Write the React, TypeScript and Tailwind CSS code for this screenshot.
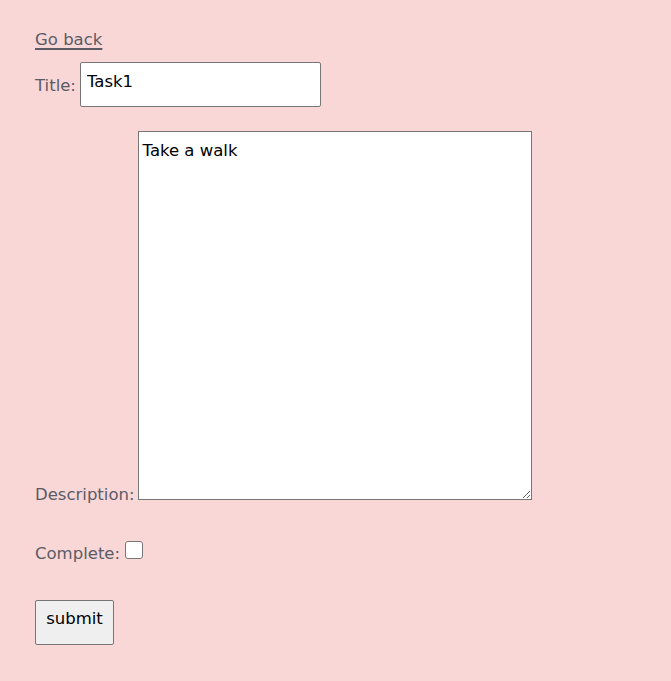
import { FC } from 'react';

const App: FC = () => {
  return (
    <div
      className="min-h-[681px] bg-[#f9d7d6] px-[35px] pt-[29px] text-[16.5px] text-[#5b5b66]"
      style={{ fontFamily: '"DejaVu Sans", "Noto Sans", sans-serif' }}
    >
      <a href="#" className="block h-[24px] leading-[22px] text-[#5b5b66] underline decoration-[2px] underline-offset-[3px]">
        Go back
      </a>

      <div className="mt-[9px] flex items-center gap-[4px]">
        <label className="mb-[-2px] leading-[20px]">Title:</label>
        <input
          type="text"
          defaultValue="Task1"
          className="h-[45px] w-[241px] rounded-[2px] border border-[#767676] bg-white px-[6px] pb-[6px] text-[16.5px] text-black outline-none"
        />
      </div>

      <div className="mt-[24px] flex items-end gap-[3px]">
        <label className="mb-[-5px] leading-[20px]">Description:</label>
        <textarea
          defaultValue="Take a walk"
          className="h-[369px] w-[394px] resize border border-[#767676] bg-white px-[4px] pt-[9px] text-[16.5px] leading-[20px] text-black outline-none"
        />
      </div>

      <div className="mt-[41px] flex items-end gap-[5px]">
        <label className="mb-[-4px] leading-[20px]">Complete:</label>
        <input type="checkbox" className="mb-[1px] h-[18px] w-[18px] appearance-none rounded-[3px] border border-[#767676] bg-white" />
      </div>

      <button className="mt-[40px] h-[45px] w-[79px] rounded-[2px] border border-[#767676] bg-[#efefef] pb-[6px] text-[16.5px] text-black">
        submit
      </button>
    </div>
  );
};

export default App;
